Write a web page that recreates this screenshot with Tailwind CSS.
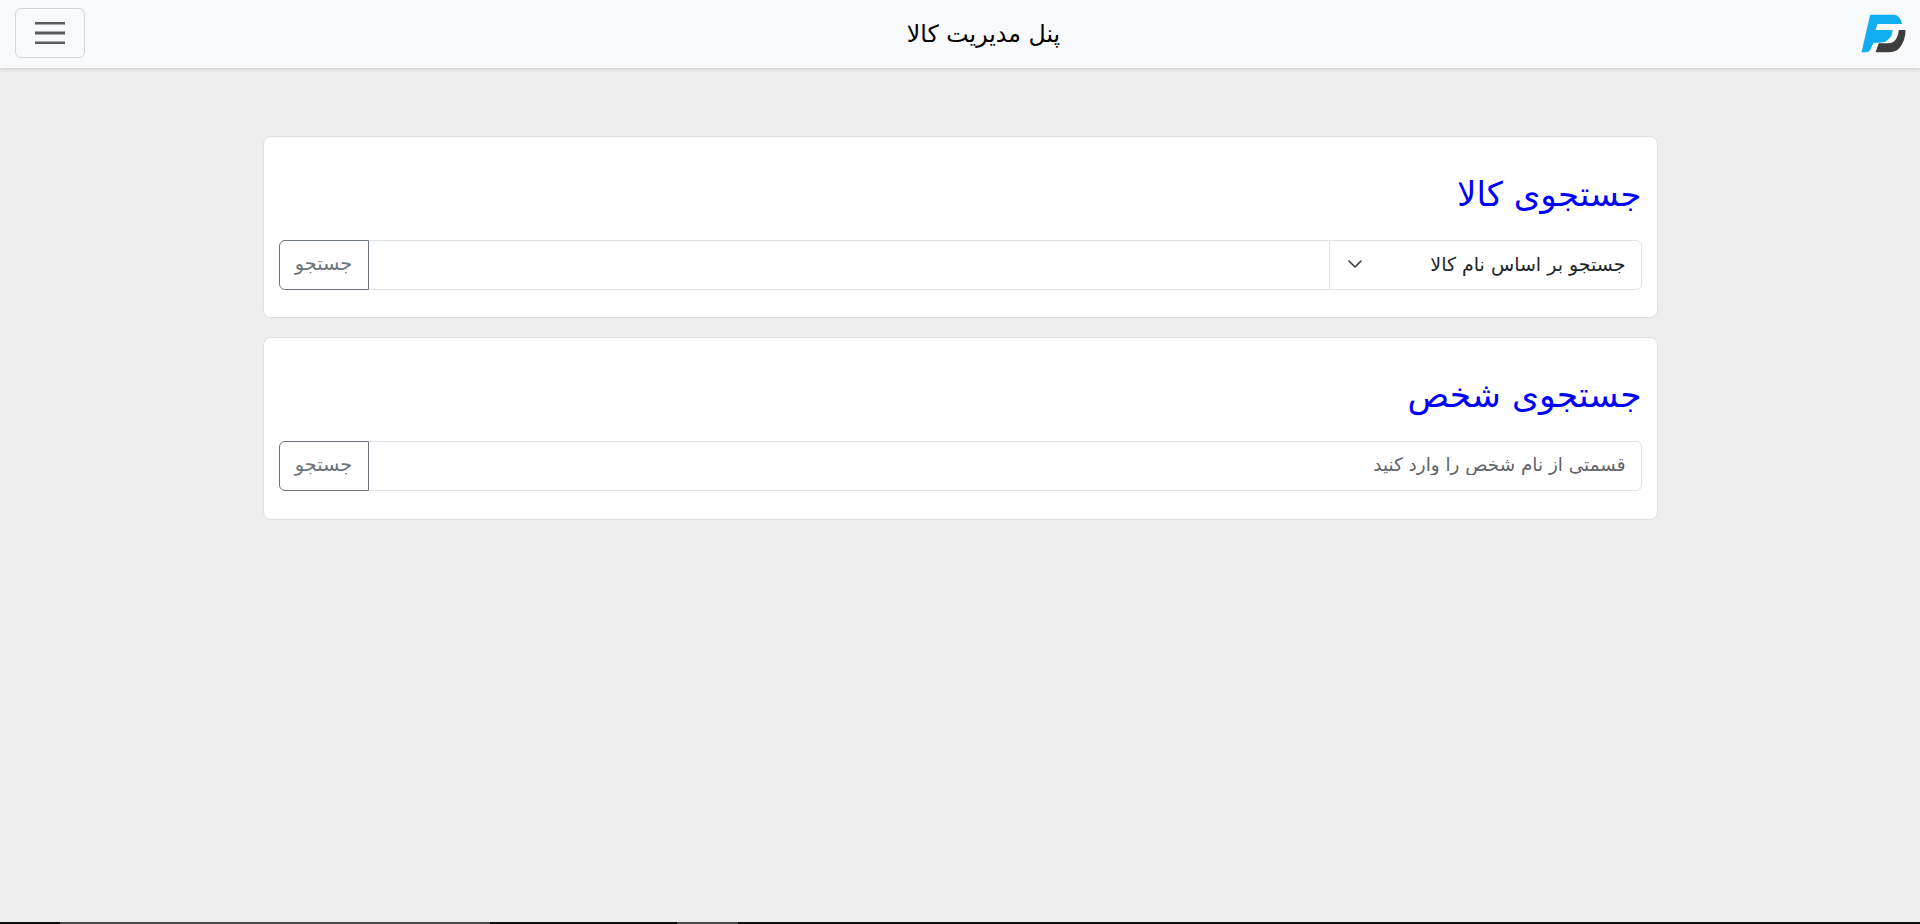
<!DOCTYPE html>
<html lang="fa" dir="rtl">
<head>
<meta charset="utf-8">
<title>پنل مدیریت کالا</title>
<script src="https://cdn.jsdelivr.net/npm/@tailwindcss/browser@4"></script>
</head>
<body class="h-[924px] overflow-hidden bg-[#eeeeee] font-['DejaVu_Sans','Noto_Sans',sans-serif] flex flex-col">
  <header dir="ltr" class="h-[68px] shrink-0 bg-[#f8f9fa] shadow-[0_1px_4px_rgba(0,0,0,0.15)] flex items-center justify-between pl-[15px] pr-[13px] relative">
    <button class="w-[70px] h-[50px] mb-[2px] border border-[#d5d6d7] rounded-md flex items-center justify-center">
      <svg width="30" height="22" viewBox="0 0 30 22" fill="none" stroke="#5a5d60" stroke-width="2.8"><path d="M0 1.2H30M0 11H30M0 21H30"/></svg>
    </button>
    <h1 class="absolute left-[905px] top-[16px] w-[157px] text-center text-[23.7px] leading-[36px] text-black">پنل مدیریت کالا</h1>
    <svg width="47" height="40" viewBox="120 40 140 120" class="mb-[1px]">
      <path d="M150 42H222Q240 44 246 70H172L166 88H217Q218 108 200 120Q190 126 170 126H160L150 148Q146 155 135 155H124Z" fill="#10aef0"/>
      <path d="M236 88H256Q256 120 238 142Q226 155 205 155H166L176 128H205Q232 126 236 88Z" fill="#3d3d3d"/>
    </svg>
  </header>
  <main class="flex-1 w-[1395px] mx-auto pt-[68px] flex flex-col gap-[19px]">
    <section class="h-[182px] bg-white border border-[#dfe0e1] rounded-lg px-[15px] pt-[38px]">
      <h2 class="text-[34px] leading-[38px] text-[#0000ff] mb-[27px]">جستجوی کالا</h2>
      <div class="flex h-[50px]">
        <div class="relative w-[313px] shrink-0">
          <select class="appearance-none w-full h-full bg-white border border-[#dee2e6] rounded-r-md pr-[15px] pb-[2px] text-[19px] text-[#212529]">
            <option>جستجو بر اساس نام کالا</option>
          </select>
          <svg class="absolute left-[18px] top-[16px] pointer-events-none" width="16" height="16" viewBox="0 0 16 16" fill="none" stroke="#343a40" stroke-width="1.6" stroke-linecap="round" stroke-linejoin="round"><path d="M2 5l6 6 6-6"/></svg>
        </div>
        <input class="flex-1 min-w-0 bg-white border-y border-l-0 border-[#dee2e6] px-3 text-[19px]" type="text">
        <button class="w-[90px] shrink-0 border border-[#6c757d] rounded-l-md pb-[2px] text-[#6c757d] text-[19.4px]">جستجو</button>
      </div>
    </section>
    <section class="h-[183px] bg-white border border-[#dfe0e1] rounded-lg px-[15px] pt-[38px]">
      <h2 class="text-[34.5px] leading-[38px] text-[#0000ff] mb-[27px]">جستجوی شخص</h2>
      <div class="flex h-[50px]">
        <input class="flex-1 min-w-0 bg-white border-y border-r border-[#dee2e6] rounded-r-md px-[15px] pb-[2px] text-[18.4px] placeholder:text-[#5f6468]" type="text" placeholder="قسمتی از نام شخص را وارد کنید">
        <button class="w-[90px] shrink-0 border border-[#6c757d] rounded-l-md pb-[2px] text-[#6c757d] text-[19.4px]">جستجو</button>
      </div>
    </section>
  </main>
  <footer dir="ltr" class="h-[2px] shrink-0 bg-[#0d0d0d] flex">
    <span class="ml-[60px] w-[430px] bg-[#4a4a4a]"></span>
    <span class="ml-[187px] w-[61px] bg-[#4a4a4a]"></span>
  </footer>
</body>
</html>
